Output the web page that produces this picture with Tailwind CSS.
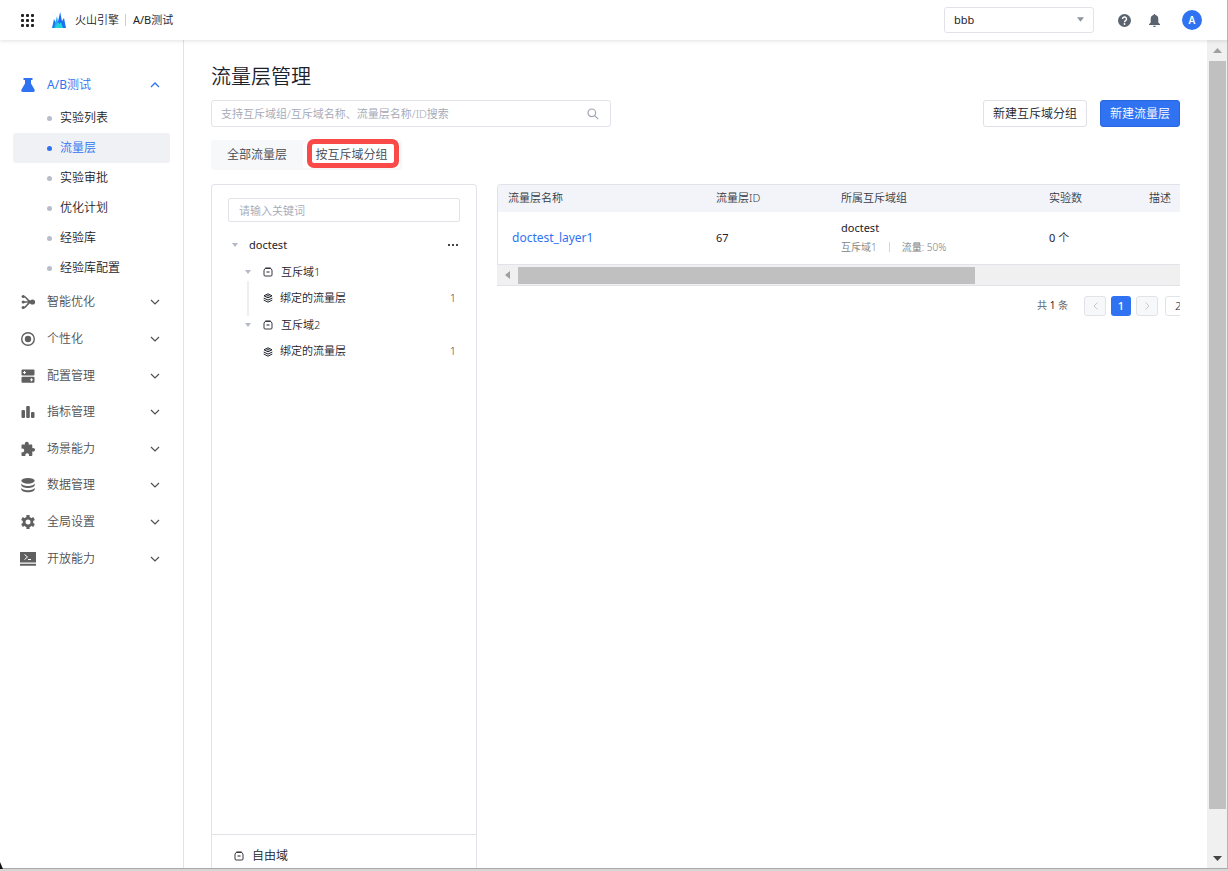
<!DOCTYPE html>
<html lang="zh-CN">
<head>
<meta charset="utf-8">
<meta name="viewport" content="width=device-width, initial-scale=1">
<title>流量层管理</title>
<script src="https://cdn.jsdelivr.net/npm/@tailwindcss/browser@4"></script>
</head>
<body class="flex h-screen flex-col overflow-hidden bg-white font-['Noto_Sans','Noto_Sans_CJK_SC',sans-serif] text-xs font-[350] text-[#1d2129]">
<svg class="hidden" aria-hidden="true">
  <symbol id="down" viewBox="0 0 10 6"><path d="M1 1l4 4 4-4" fill="none" stroke="currentColor" stroke-width="1.2"/></symbol>
  <symbol id="up" viewBox="0 0 10 6"><path d="M1 5l4-4 4 4" fill="none" stroke="currentColor" stroke-width="1.3"/></symbol>
  <symbol id="caret" viewBox="0 0 6 4"><path d="M0 0h6L3 4z" fill="currentColor"/></symbol>
  <symbol id="box" viewBox="0 0 10 10"><path d="M2.500 1.200h5L9 3v5c0 .7-.4 1-1.100 1H2.100C1.400 9 1 8.700 1 8V3z" fill="none" stroke="currentColor" stroke-width=".9"/><path d="M2.300 1.200h5.400M3.500 5h3" fill="none" stroke="currentColor"/></symbol>
  <symbol id="layers" viewBox="0 0 10 10"><path d="M5 .8l4 2L5 4.800 1 2.800z" fill="none" stroke="currentColor"/><path d="M3.500 2.800h3" stroke="currentColor"/><path d="M.7 5L5 7.100 9.300 5M.7 7L5 9.200 9.300 7" fill="none" stroke="currentColor"/></symbol>
</svg>

<header class="z-10 flex h-10 shrink-0 items-center border-r border-[#b5b5b5] bg-white pr-[25px] pl-[21px] shadow-[0_1px_4px_rgba(0,0,0,0.12)]">
  <button type="button" aria-label="应用列表"><svg class="size-[13px]" viewBox="0 0 13 13" fill="#222"><rect width="3" height="3" rx="1"/><rect x="5" width="3" height="3" rx="1"/><rect x="10" width="3" height="3" rx="1"/><rect y="5" width="3" height="3" rx="1"/><rect x="5" y="5" width="3" height="3" rx="1"/><rect x="10" y="5" width="3" height="3" rx="1"/><rect y="10" width="3" height="3" rx="1"/><rect x="5" y="10" width="3" height="3" rx="1"/><rect x="10" y="10" width="3" height="3" rx="1"/></svg></button>
  <a href="#" class="ml-[18px] flex items-center gap-[9px] text-[11px]">
    <svg class="h-4 w-[14px]" viewBox="0 0 14 16"><path d="M0 16L2 7l2 4 1 5z" fill="#1677f5"/><path d="M9 16l1-7 2-3 2 10z" fill="#1e72f0"/><path d="M2 16L5 4l2 12z" fill="#25a8f0"/><path d="M4.500 16L8.200 0l3 16z" fill="#1769ff"/><path d="M3 16l3-6 1.500 2L9 10l2 6z" fill="#25d3d6"/></svg>
    <span>火山引擎</span>
  </a>
  <a href="#" class="ml-[6px] border-l border-[#c9cdd4] pl-[7px] text-[11px] leading-3"><span class="font-normal">A/B</span>测试</a>
  <div class="relative ml-auto">
    <select aria-label="项目" class="h-[26px] w-[150px] appearance-none rounded-[3px] border border-[#e1e3e9] bg-white pl-[9px] text-[11px] font-normal text-[#1d2129]"><option>bbb</option></select>
    <svg class="pointer-events-none absolute top-[10px] right-[10px] h-[5px] w-[7px] text-[#8f959e]"><use href="#caret"/></svg>
  </div>
  <button type="button" aria-label="帮助" class="ml-6"><svg class="size-[13px]" viewBox="0 0 13 13"><circle cx="6.500" cy="6.500" r="6.500" fill="#5a646e"/><path d="M4.500 5a2 2 0 1 1 3 1.700c-.7.4-1 .7-1 1.500" fill="none" stroke="#fff" stroke-width="1.400"/><circle cx="6.500" cy="10" r=".9" fill="#fff"/></svg></button>
  <button type="button" aria-label="通知" class="ml-[18px]"><svg class="h-[13px] w-[11px]" viewBox="0 0 11 13" fill="#5a646e"><path d="M5.500 0c.6 0 .9.400.9.900C8.300 1.300 9.300 2.800 9.300 5v3.500L11 10.200v.8H0v-.8l1.700-1.700V5c0-2.200 1-3.700 2.900-4.100C4.600.4 4.900 0 5.500 0zM4.200 11.700h2.600c0 .7-.5 1.300-1.300 1.300s-1.300-.6-1.300-1.300z"/></svg></button>
  <button type="button" aria-label="账户" class="ml-[22px] size-5 rounded-full bg-[#2f73f2] font-['Inter'] text-[10px] leading-5 font-semibold text-white">A</button>
</header>

<div class="flex min-h-0 flex-1">
  <aside class="w-[184px] shrink-0 border-r border-[#e1e3e8] pt-[29px]">
    <nav aria-label="主导航" class="text-[#505050]">
      <a href="#" class="flex h-8 items-center pr-[23px] pl-5 text-[#2f73f2]">
        <svg class="size-4" viewBox="0 0 16 16" fill="currentColor"><path d="M3.500 1h9v2H11v3.500l3.500 6c.7 1.300 0 2.500-1.300 2.500H2.800c-1.300 0-2-1.200-1.300-2.500l3.500-6V3H3.500z"/></svg>
        <span class="ml-[11px] flex-1"><span class="font-normal">A/B</span>测试</span><svg class="h-[6px] w-[10px]"><use href="#up"/></svg>
      </a>
      <ul class="px-[13px] pt-[2px] text-[#1d2129]">
        <li><a href="#" class="flex h-[30px] items-center gap-2 pl-[34px]"><span class="size-[5px] rounded-full bg-[#b9bdcb]"></span>实验列表</a></li>
        <li><a href="#" aria-current="page" class="flex h-[30px] items-center gap-2 rounded-[3px] bg-[#f0f1f5] pl-[34px] text-[#2f73f2]"><span class="size-[5px] rounded-full bg-[#2f73f2]"></span>流量层</a></li>
        <li><a href="#" class="flex h-[30px] items-center gap-2 pl-[34px]"><span class="size-[5px] rounded-full bg-[#b9bdcb]"></span>实验审批</a></li>
        <li><a href="#" class="flex h-[30px] items-center gap-2 pl-[34px]"><span class="size-[5px] rounded-full bg-[#b9bdcb]"></span>优化计划</a></li>
        <li><a href="#" class="flex h-[30px] items-center gap-2 pl-[34px]"><span class="size-[5px] rounded-full bg-[#b9bdcb]"></span>经验库</a></li>
        <li><a href="#" class="flex h-[30px] items-center gap-2 pl-[34px]"><span class="size-[5px] rounded-full bg-[#b9bdcb]"></span>经验库配置</a></li>
      </ul>
      <ul class="mt-px grid h-[293px] auto-rows-fr">
        <li><a href="#" class="flex h-full items-center pr-[23px] pl-5"><svg class="size-4" viewBox="0 0 16 16" fill="#606060"><path d="M3 2.500h1c3 0 3 5.500 8 5.500-5 0-5 5.500-8 5.500H3M2 8h10" fill="none" stroke="#606060" stroke-width="1.500"/><circle cx="3.200" cy="2.500" r="1.600"/><circle cx="3.200" cy="8" r="1.600"/><circle cx="3.200" cy="13.500" r="1.600"/><circle cx="12.500" cy="8" r="2.600"/></svg><span class="ml-[11px] flex-1">智能优化</span><svg class="h-[6px] w-[10px]"><use href="#down"/></svg></a></li>
        <li><a href="#" class="flex h-full items-center pr-[23px] pl-5"><svg class="size-4" viewBox="0 0 16 16"><circle cx="8" cy="8" r="6.300" fill="none" stroke="#606060" stroke-width="1.400"/><circle cx="8" cy="8" r="3.200" fill="#606060"/></svg><span class="ml-[11px] flex-1">个性化</span><svg class="h-[6px] w-[10px]"><use href="#down"/></svg></a></li>
        <li><a href="#" class="flex h-full items-center pr-[23px] pl-5"><svg class="size-4" viewBox="0 0 16 16"><rect x="1.500" y="1.500" width="13" height="6" rx="1" fill="#606060"/><rect x="1.500" y="8.800" width="13" height="6" rx="1" fill="#606060"/><path d="M4.500 3v3M3 4.500h3M11.500 10.300v3M10 11.800h3" stroke="#fff"/></svg><span class="ml-[11px] flex-1">配置管理</span><svg class="h-[6px] w-[10px]"><use href="#down"/></svg></a></li>
        <li><a href="#" class="flex h-full items-center pr-[23px] pl-5"><svg class="size-4" viewBox="0 0 16 16" fill="#606060"><rect x="1.500" y="6" width="3.500" height="8" rx="1"/><rect x="6.200" y="2" width="3.600" height="12" rx="1"/><rect x="11" y="8" width="3.500" height="6" rx="1"/></svg><span class="ml-[11px] flex-1">指标管理</span><svg class="h-[6px] w-[10px]"><use href="#down"/></svg></a></li>
        <li><a href="#" class="flex h-full items-center pr-[23px] pl-5"><svg class="size-4" viewBox="0 0 16 16" fill="#606060"><path d="M2.500 3.500H5C4.400 1.700 5.500.8 6.800.8s2.400.9 1.800 2.700h2.700c.6 0 1 .4 1 1v2.700c1.600-.5 2.700.3 2.700 1.600s-1.100 2.200-2.700 1.600V14c0 .6-.4 1-1 1H9c.4-1.700-.5-2.700-1.800-2.700S5 13.300 5.400 15H2.500c-.6 0-1-.4-1-1v-2.800c1.700.5 2.700-.4 2.700-1.700S3.200 7.200 1.500 7.700V4.500c0-.6.4-1 1-1z"/></svg><span class="ml-[11px] flex-1">场景能力</span><svg class="h-[6px] w-[10px]"><use href="#down"/></svg></a></li>
        <li><a href="#" class="flex h-full items-center pr-[23px] pl-5"><svg class="size-4" viewBox="0 0 16 16"><ellipse cx="8" cy="3.800" rx="6.700" ry="2.900" fill="#606060"/><path d="M1.300 6c0 4 13.400 4 13.400 0v2c0 4-13.400 4-13.400 0zM1.300 10.300c0 4 13.400 4 13.400 0v2c0 4-13.400 4-13.400 0z" fill="#606060"/></svg><span class="ml-[11px] flex-1">数据管理</span><svg class="h-[6px] w-[10px]"><use href="#down"/></svg></a></li>
        <li><a href="#" class="flex h-full items-center pr-[23px] pl-5"><svg class="size-4" viewBox="0 0 16 16"><circle cx="8" cy="8" r="3.900" fill="none" stroke="#606060" stroke-width="2.800"/><path d="M8 1v2.500M8 12.500V15M1.940 4.500l2.160 1.250M11.900 10.250l2.160 1.250M1.940 11.500l2.160-1.250M11.900 5.750l2.160-1.250" stroke="#606060" stroke-width="3.200"/></svg><span class="ml-[11px] flex-1">全局设置</span><svg class="h-[6px] w-[10px]"><use href="#down"/></svg></a></li>
        <li><a href="#" class="flex h-full items-center pr-[23px] pl-5"><svg class="size-4" viewBox="0 0 16 16"><path d="M0 1h16v10.500H0zM0 12.800h16v2H0z" fill="#606060"/><path d="M4.500 3.500l3 2.500-3 2.500M8 8.500h3" fill="none" stroke="#fff"/></svg><span class="ml-[11px] flex-1">开放能力</span><svg class="h-[6px] w-[10px]"><use href="#down"/></svg></a></li>
      </ul>
    </nav>
  </aside>

  <main class="flex min-w-0 flex-1 flex-col pt-[23px] pr-[27px] pl-[27px]">
    <h1 class="text-xl leading-7">流量层管理</h1>
    <div class="mt-[9px] flex items-center">
      <div class="relative w-[400px]">
        <input type="search" aria-label="搜索流量层" placeholder="支持互斥域组/互斥域名称、流量层名称/ID搜索" class="block h-[27px] w-full rounded-[3px] border border-[#e1e3e9] px-[9px] text-[11px] placeholder:text-[#a3a8b6]">
        <svg class="absolute top-2 right-3 size-3" viewBox="0 0 12 12" fill="none" stroke="#a0a5b1" stroke-width="1.200"><circle cx="4.800" cy="4.800" r="3.800"/><path d="M7.600 7.600l3.600 3.600"/></svg>
      </div>
      <button type="button" class="ml-auto h-[27px] rounded-[3px] border border-[#dfe1e7] px-[9px]">新建互斥域分组</button>
      <button type="button" class="ml-[13px] h-[27px] rounded-[3px] border border-[#2868de] bg-[#2f73f2] px-[9px] text-white">新建流量层</button>
    </div>
    <div role="tablist" class="mt-[13px] flex h-[30px] self-start rounded-[3px] bg-[#f7f8fa] py-[2px] pr-[2px] text-[#42474f]">
      <button type="button" role="tab" aria-selected="false" class="w-[92px]">全部流量层</button>
      <button type="button" role="tab" aria-selected="true" class="relative w-[97px] rounded-[3px] bg-white">按互斥域分组<span class="absolute -top-[3px] left-1 h-[29px] w-[92px] rounded-[7px] border-[5px] border-[#f94a49]"></span></button>
    </div>

    <div class="mt-[14px] flex min-h-0 flex-1 gap-5">
      <section aria-label="互斥域" class="flex w-[266px] shrink-0 flex-col rounded-t-[4px] border border-b-0 border-[#e1e3e9]">
        <div class="px-4 pt-[13px] text-[11px]">
          <input type="text" aria-label="关键词" placeholder="请输入关键词" class="block h-6 w-full rounded-[2px] border border-[#e1e3e9] px-[10px] text-[11px] placeholder:text-[#a3a8b6]">
          <ul class="relative mt-[10px] grid h-[133px] auto-rows-fr">
            <li class="flex items-center pr-[2px] pl-1"><svg class="h-1 w-[6px] text-[#b4b9c6]"><use href="#caret"/></svg><span class="ml-[11px] flex-1 font-normal">doctest</span><button type="button" aria-label="更多"><svg class="h-[2px] w-[10px]" viewBox="0 0 10 2" fill="#444"><path d="M0 0h2v2H0zM4 0h2v2H4zM8 0h2v2H8z"/></svg></button></li>
            <li class="flex items-center pl-[17px]"><svg class="h-1 w-[6px] text-[#b4b9c6]"><use href="#caret"/></svg><svg class="ml-3 size-[10px]"><use href="#box"/></svg><span class="ml-2">互斥域1</span></li>
            <li class="flex items-center pr-1 pl-[35px]"><svg class="size-[10px]"><use href="#layers"/></svg><span class="ml-[7px] flex-1">绑定的流量层</span><span class="text-[#42474f]">1</span></li>
            <li class="flex items-center pl-[17px]"><svg class="h-1 w-[6px] text-[#b4b9c6]"><use href="#caret"/></svg><svg class="ml-3 size-[10px]"><use href="#box"/></svg><span class="ml-2">互斥域2</span></li>
            <li class="flex items-center pr-1 pl-[35px]"><svg class="size-[10px]"><use href="#layers"/></svg><span class="ml-[7px] flex-1">绑定的流量层</span><span class="text-[#42474f]">1</span></li>
            <li aria-hidden="true" class="absolute top-[49px] left-[19px] h-[35px] w-[2px] bg-[#eeeff2]"></li>
          </ul>
        </div>
        <div class="mt-auto flex h-[34px] items-center border-t border-[#e1e3e9] pt-2 pl-[22px]"><svg class="size-[10px]"><use href="#box"/></svg><span class="ml-2">自由域</span></div>
      </section>

      <section aria-label="流量层列表" class="min-w-0 flex-1 overflow-hidden text-[11px]">
        <div class="overflow-hidden rounded-tl-[4px] border border-r-0 border-[#e1e3e9]">
          <table class="w-[780px] table-fixed text-left">
            <colgroup><col class="w-[208px]"><col class="w-[125px]"><col class="w-[208px]"><col class="w-[100px]"><col></colgroup>
            <thead class="bg-[#f3f4f9] text-[#363a43]"><tr class="h-[27px]"><th class="px-[10px] font-[350]">流量层名称</th><th class="px-[10px] font-[350]">流量层ID</th><th class="px-[10px] font-[350]">所属互斥域组</th><th class="px-[10px] font-[350]">实验数</th><th class="px-[10px] font-[350]">描述</th></tr></thead>
            <tbody><tr class="h-[52px]"><td class="pl-[14px] text-xs font-normal"><a href="#" class="text-[#2f73f2]">doctest_layer1</a></td><td class="px-[10px] font-normal">67</td><td class="px-[10px]"><div class="text-[11px] leading-[18px] font-normal">doctest</div><div class="flex items-center text-[10px] leading-5 text-[#7c7c7c]"><span>互斥域1</span><span class="mx-3 h-[10px] w-px bg-[#d5d6dc]"></span><span>流量: 50%</span></div></td><td class="px-[10px]"><span class="font-normal">0</span> 个</td><td></td></tr></tbody>
          </table>
        </div>
        <div class="flex h-[21px] items-center border-b border-[#e1e3e9] bg-[#f0f0f0] pl-2">
          <svg class="h-2 w-[5px]" viewBox="0 0 5 8"><path d="M5 0v8L0 4z" fill="#a0a0a0"/></svg>
          <div class="ml-2 h-[17px] w-[457px] bg-[#c0c0c0]"></div>
        </div>
        <div class="mt-[10px] flex h-5 items-center justify-end">
          <span class="mr-4 text-[10px] text-[#4e5563]">共 <span class="font-normal text-[#1d2129]">1</span> 条</span>
          <button type="button" aria-label="上一页" class="mr-[5px] flex h-5 w-[22px] items-center justify-center rounded-[3px] border border-[#e1e3e9] bg-[#f7f8fa]"><svg class="h-2 w-[5px]" viewBox="0 0 5 8"><path d="M4.500.5L1 4l3.500 3.500" fill="none" stroke="#c4c8d2"/></svg></button>
          <button type="button" aria-current="page" class="mr-[5px] h-5 w-5 rounded-[3px] bg-[#2f73f2] font-medium text-white">1</button>
          <button type="button" aria-label="下一页" class="mr-[7px] flex h-5 w-[22px] items-center justify-center rounded-[3px] border border-[#e1e3e9] bg-[#f7f8fa]"><svg class="h-2 w-[5px]" viewBox="0 0 5 8"><path d="M.5.5L4 4 .5 7.500" fill="none" stroke="#c4c8d2"/></svg></button>
          <div class="w-[15px] overflow-hidden"><select aria-label="每页条数" class="block h-5 w-[80px] appearance-none rounded-[3px] border border-[#e1e3e9] bg-white pl-[9px] text-[11px]"><option>20 条/页</option></select></div>
        </div>
      </section>
    </div>
  </main>

  <div aria-hidden="true" class="flex w-[21px] shrink-0 flex-col border-r border-[#b5b5b5] bg-[#f0f0f0] pl-[2px]">
    <div class="flex h-[21px] w-[17px] items-center justify-center"><svg class="h-[5px] w-[9px]" viewBox="0 0 9 5"><path d="M4.500 0L9 5H0z" fill="#a0a0a0"/></svg></div>
    <div class="w-[17px] flex-1 bg-[#c0c0c0]"></div>
    <div class="flex h-[59px] w-[17px] items-end justify-center pb-[7px]"><svg class="h-[5px] w-[9px]" viewBox="0 0 9 5"><path d="M0 0h9L4.500 5z" fill="#444"/></svg></div>
  </div>
</div>
<footer aria-hidden="true" class="relative h-[3px] shrink-0 border-t border-[#aaa] bg-[#d6d6d6]"><svg class="absolute bottom-[2px] left-0 h-[7px] w-[3px]" viewBox="0 0 3 7"><path d="M0 0l3 7H0z" fill="#111"/></svg></footer>
</body>
</html>
